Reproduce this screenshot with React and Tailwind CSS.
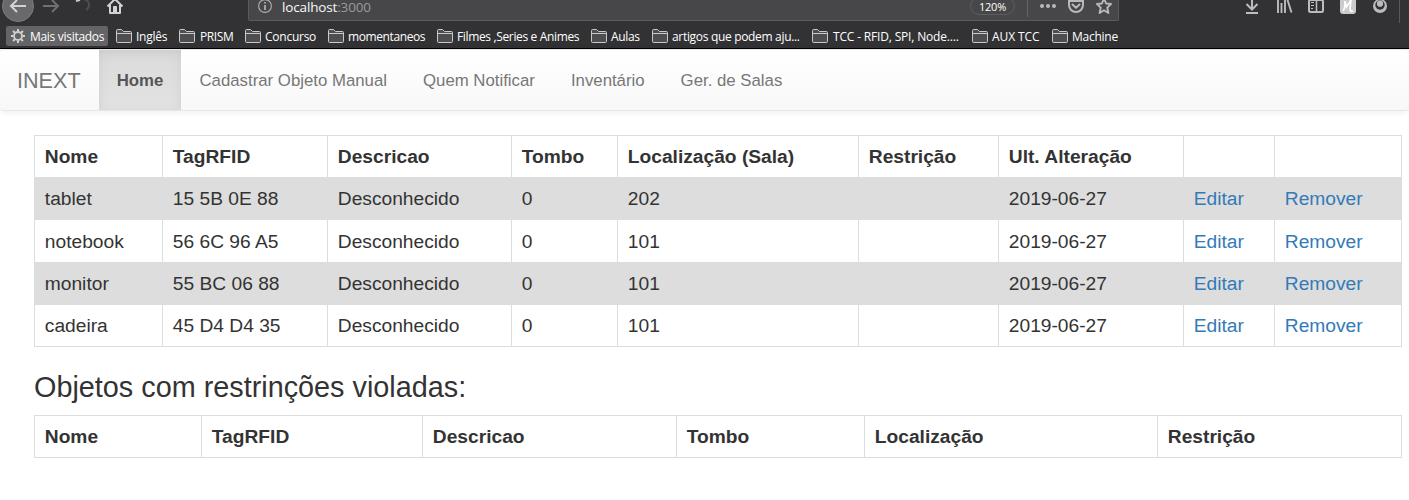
import React from "react";

const bookmarks = [
  { label: "Inglês", slot: "w-[63px]", text: "tracking-[-0.25px]" },
  { label: "PRISM", slot: "w-[66px]", text: "tracking-[-0.4px] pl-px" },
  { label: "Concurso", slot: "w-[83px]", text: "tracking-[-0.25px]" },
  { label: "momentaneos", slot: "w-[109px]", text: "tracking-[-0.4px]" },
  { label: "Filmes ,Series e Animes", slot: "w-[154px]", text: "tracking-[-0.35px]" },
  { label: "Aulas", slot: "w-[61px]", text: "tracking-[-0.35px]" },
  { label: "artigos que podem aju...", slot: "w-[160px]", text: "tracking-[-0.32px]" },
  { label: "TCC - RFID, SPI, Node....", slot: "w-[160px]", text: "tracking-[-0.17px] pl-px" },
  { label: "AUX TCC", slot: "w-[80px]", text: "tracking-[-0.1px]" },
  { label: "Machine", slot: "w-[80px]", text: "tracking-[-0.25px]" },
];

const objects = [
  ["tablet", "15 5B 0E 88", "Desconhecido", "0", "202", "", "2019-06-27"],
  ["notebook", "56 6C 96 A5", "Desconhecido", "0", "101", "", "2019-06-27"],
  ["monitor", "55 BC 06 88", "Desconhecido", "0", "101", "", "2019-06-27"],
  ["cadeira", "45 D4 D4 35", "Desconhecido", "0", "101", "", "2019-06-27"],
];

const objectColumns = [
  ["Nome", "w-[128px]"],
  ["TagRFID", "w-[165px]"],
  ["Descricao", "w-[184px]"],
  ["Tombo", "w-[106px]"],
  ["Localização (Sala)", "w-[241px]"],
  ["Restrição", "w-[140px]"],
  ["Ult. Alteração", "w-[185px]"],
  ["", "w-[91px]"],
  ["", "w-[127px]"],
];

const violationColumns = [
  ["Nome", "w-[167px]"],
  ["TagRFID", "w-[221px]"],
  ["Descricao", "w-[254px]"],
  ["Tombo", "w-[188px]"],
  ["Localização", "w-[293px]"],
  ["Restrição", "w-[244px]"],
];

function Folder() {
  return (
    <svg className="h-4 w-4 shrink-0" viewBox="0 0 16 16" fill="none" stroke="#c9c9ca" strokeWidth="1">
      <path d="M.5 13.500V2.500Q.5 1.500 1.500 1.500H5.500L7.500 3.500H14.500Q15.500 3.500 15.500 4.500V13.500Q15.500 14.500 14.500 14.500H1.500Q.5 14.500 .5 13.500Z" fill="#4e4e50" />
      <path d="M.5 5.500H15.500" />
    </svg>
  );
}

function Gear() {
  return (
    <svg className="h-[14px] w-[14px] shrink-0" viewBox="0 0 14 14" fill="none" stroke="#d0d0d1">
      <circle cx="7" cy="7" r="4" strokeWidth="1.800" />
      <path strokeWidth="2" d="M7 0V2.500M7 11.500V14M0 7H2.500M11.500 7H14M2.050 2.050L3.800 3.800M10.200 10.200L11.950 11.950M11.950 2.050L10.200 3.800M3.800 10.200L2.050 11.950" />
    </svg>
  );
}

function BrowserBar() {
  return (
    <div className="h-[22px] flex items-start">
      <svg className="h-[22px] w-[248px] shrink-0" viewBox="0 0 248 22" fill="none">
        <circle cx="18" cy="6" r="15.500" fill="#69696b" stroke="#7d7d7f" />
        <path d="M26 6H11M17 0L11 6L17 12" stroke="#d2d2d3" strokeWidth="2" />
        <path d="M43 6H58M52 0L58 6L52 12" stroke="#707072" strokeWidth="2" />
        <path d="M76 1L80 0" stroke="#c8c8c8" strokeWidth="2" />
        <path d="M83 -1Q89 0 89 5Q89 8 86 10" stroke="#505052" strokeWidth="1.800" />
        <path d="M107.500 6.500L115 -1L122.500 6.500M110 5V13H120V5" stroke="#d2d2d3" strokeWidth="2" strokeLinejoin="round" />
        <path d="M113.500 12V6.500H116.500V12" fill="#d2d2d3" stroke="#d2d2d3" />
      </svg>
      <div className="h-[21px] w-[871px] shrink-0 rounded-b-[2px] border border-t-0 border-[#5b5b5e] bg-[#474749] flex items-start">
        <svg className="ml-[9px] h-[14px] w-[14px]" viewBox="0 0 14 14" fill="none" stroke="#b1b1b3">
          <circle cx="7" cy="6" r="6.400" strokeWidth="1.100" />
          <path d="M7 5V10M7 2V3.600" strokeWidth="1.700" />
        </svg>
        <div className="ml-[10px] w-[688px] text-[13.5px] leading-[14px] text-[#f9f9fa] whitespace-nowrap tracking-[-0.15px]">
          localhost<span className="text-[#9a9a9c]">:3000</span>
        </div>
        <div className="mt-[-3px] h-[18px] w-[45px] rounded-full border border-[#5d5d60] text-center text-[11px] leading-[18px] tracking-[-0.2px] text-white">120%</div>
        <svg className="ml-[8px] h-[20px] w-[92px]" viewBox="0 0 92 20" fill="none" stroke="#b9b9bb">
          <path d="M4.500 0V17" stroke="#646467" />
          <g fill="#b9b9bb" stroke="none">
            <circle cx="19" cy="6" r="2" />
            <circle cx="25" cy="6" r="2" />
            <circle cx="31" cy="6" r="2" />
          </g>
          <path d="M46 1V5A7 7 0 0 0 60 5V1Z" strokeWidth="2" />
          <path d="M49.500 4.500L53 7.800L56.500 4.500" strokeWidth="2" strokeLinecap="round" strokeLinejoin="round" />
          <path d="M81 -1.500L83.100 3.500L88 4L84.300 7.700L85.400 13L81 10.300L76.600 13L77.700 7.700L74 4L78.900 3.500Z" strokeWidth="1.900" strokeLinejoin="round" />
        </svg>
      </div>
      <svg className="h-[24px] w-[290px] shrink-0" viewBox="0 0 290 24" fill="none" stroke="#bcbcbe" strokeWidth="2">
        <path d="M133 -1V9M127.500 4L133 9.500L138.500 4M127 13H139" />
        <path d="M159 0V13M162.500 3V13M166 0V13M168.500 0L172.500 12.500" strokeWidth="1.900" />
        <rect x="190" y="0" width="14" height="12" rx="1.500" />
        <path d="M197.500 0V12" strokeWidth="1.500" />
        <path d="M192 2.500H195M192 5.500H195M192 8.500H194" strokeWidth="1" />
        <rect x="221" y="-2" width="16" height="16" rx="3" fill="#cbcbcc" stroke="none" />
        <path d="M224 11C226 9 226 5 226 1L227.500 7L232 0L231 9Q231 12 234 11" stroke="#fff" strokeWidth="1.600" />
        <g stroke="none">
          <circle cx="261" cy="6" r="7" fill="#bcbcbe" />
          <circle cx="261" cy="5" r="4.700" fill="#323234" />
          <circle cx="261" cy="3.700" r="3.100" fill="#bcbcbe" />
        </g>
        <path d="M280.500 0V23" stroke="#5a5a5c" strokeWidth="1" />
      </svg>
    </div>
  );
}

function HeaderRow({ columns }) {
  return (
    <tr className="h-[42px]">
      {columns.map(([name, width], i) => (
        <th key={i} className={`${width} border-r border-b border-[#ddd] p-0 pl-[9.8px] text-left align-middle font-bold`}>
          {name}
        </th>
      ))}
    </tr>
  );
}

const tableClass =
  "table-fixed w-[1368px] border-separate border-spacing-0 border-t border-l border-[#ddd] text-[19.2px] leading-[27px] whitespace-nowrap";
const cellClass = "border-r border-b border-[#ddd] p-0 pl-[9.8px] align-middle";

export default function App() {
  return (
    <div className="h-[500px] w-[1409px] overflow-hidden bg-white text-[#333] font-['Liberation_Sans',Arial,sans-serif]">
      <header className="h-[49px] border-b border-black bg-[#323234] font-['Open_Sans','Noto_Sans',sans-serif]">
        <BrowserBar />
        <div className="mt-[4px] ml-[6px] flex h-5 items-center text-[12px] whitespace-nowrap text-white">
          <div className="mr-[8px] flex h-5 w-[102px] shrink-0 items-center rounded-[2px] bg-[#646466] pl-[5px]">
            <Gear />
            <span className="ml-[5px] pt-[2px] tracking-[-0.3px]">Mais visitados</span>
          </div>
          {bookmarks.map((b) => (
            <div key={b.label} className={`${b.slot} flex shrink-0 items-center gap-1`}>
              <Folder />
              <span className={`pt-[2px] ${b.text}`}>{b.label}</span>
            </div>
          ))}
        </div>
      </header>

      <nav className="flex h-[62px] rounded-[4px] border-y border-[#e7e7e7] bg-linear-to-b from-white to-[#f8f8f8] text-[16.8px] text-[#777] shadow-[0_1px_6px_rgba(0,0,0,0.075)]">
        <a className="flex w-[99px] items-center pt-[2px] pl-[17px] text-[21.6px]">INEXT</a>
        <a className="flex w-[82px] items-center justify-center bg-linear-to-b from-[#dbdbdb] to-[#e2e2e2] pt-[2px] font-bold text-[#555] shadow-[inset_0_3px_11px_rgba(0,0,0,0.075)]">Home</a>
        <a className="flex items-center pt-[2px] pr-[18px] pl-[18.500px]">Cadastrar Objeto Manual</a>
        <a className="flex items-center px-[18px] pt-[2px]">Quem Notificar</a>
        <a className="flex items-center px-[18px] pt-[2px]">Inventário</a>
        <a className="flex items-center px-[18px] pt-[2px]">Ger. de Salas</a>
      </nav>

      <main className="pt-[24px] pl-[34px]">
        <table className={tableClass}>
          <thead>
            <HeaderRow columns={objectColumns} />
          </thead>
          <tbody>
            {objects.map((row, i) => (
              <tr key={row[0]} className={`${i === 1 ? "h-[43px]" : "h-[42px]"} ${i % 2 === 0 ? "bg-[#ddd]" : "bg-white"}`}>
                {row.map((value, j) => (
                  <td key={j} className={cellClass}>{value}</td>
                ))}
                <td className={`${cellClass} text-[#337ab7]`}>Editar</td>
                <td className={`${cellClass} text-[#337ab7]`}>Remover</td>
              </tr>
            ))}
          </tbody>
        </table>

        <h3 className="mt-[24px] mb-[12px] text-[28.8px] leading-[32px]">Objetos com restrinções violadas:</h3>

        <table className={tableClass}>
          <thead>
            <HeaderRow columns={violationColumns} />
          </thead>
        </table>
      </main>
    </div>
  );
}
